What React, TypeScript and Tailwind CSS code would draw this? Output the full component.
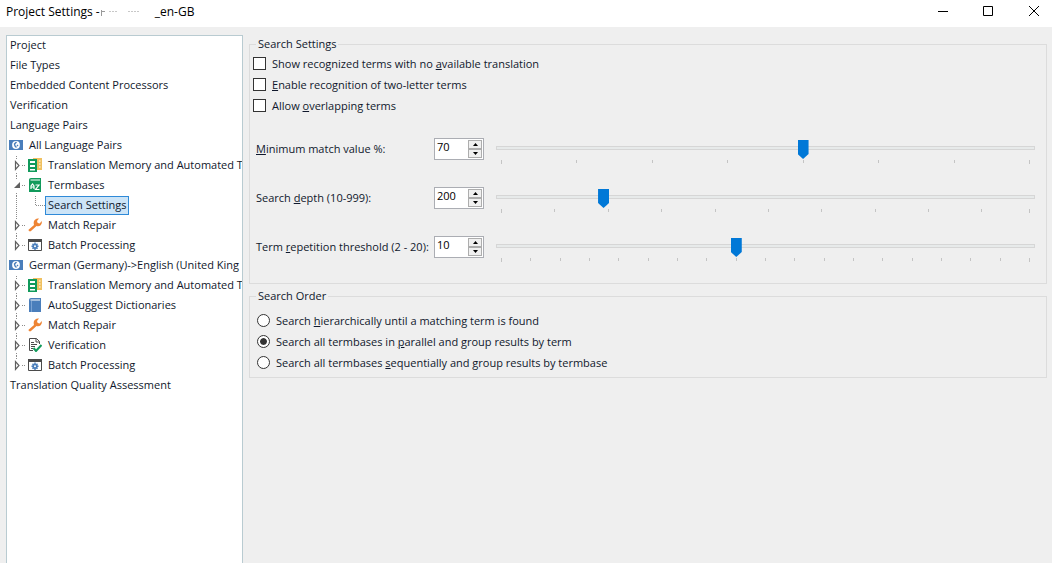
import { useState } from 'react';
import type { ReactNode } from 'react';

type IconName = 'globe' | 'memory' | 'termbase' | 'wrench' | 'batch' | 'book' | 'verify';

interface TreeItem {
  label: string;
  level: 0 | 1 | 2 | 3;
  icon?: IconName;
  open?: boolean;
  last?: boolean;
}

const treeItems: TreeItem[] = [
  { label: 'Project', level: 0 },
  { label: 'File Types', level: 0 },
  { label: 'Embedded Content Processors', level: 0 },
  { label: 'Verification', level: 0 },
  { label: 'Language Pairs', level: 0 },
  { label: 'All Language Pairs', level: 1, icon: 'globe' },
  { label: 'Translation Memory and Automated Tr', level: 2, icon: 'memory' },
  { label: 'Termbases', level: 2, icon: 'termbase', open: true },
  { label: 'Search Settings', level: 3 },
  { label: 'Match Repair', level: 2, icon: 'wrench' },
  { label: 'Batch Processing', level: 2, icon: 'batch', last: true },
  { label: 'German (Germany)->English (United King', level: 1, icon: 'globe' },
  { label: 'Translation Memory and Automated Tr', level: 2, icon: 'memory' },
  { label: 'AutoSuggest Dictionaries', level: 2, icon: 'book' },
  { label: 'Match Repair', level: 2, icon: 'wrench' },
  { label: 'Verification', level: 2, icon: 'verify' },
  { label: 'Batch Processing', level: 2, icon: 'batch', last: true },
  { label: 'Translation Quality Assessment', level: 0 },
];

const icons: Record<IconName, ReactNode> = {
  globe: (
    <>
      <path d="M0 2h14v10H0z" fill="#4a7ebb" />
      <circle cx="7" cy="7" r="3.900" fill="#fff" />
      <path d="M7.500 4 5.500 6l.5 2 1.500 1.500M8 7l1 1" fill="none" stroke="#4a7ebb" strokeWidth="1.400" />
    </>
  ),
  memory: (
    <>
      <path d="M5 0h9v12H5z" fill="#f0c060" />
      <path d="M11 2h1.500v2H11zM11 5h1.500v2H11zM11 8h1.500v2H11z" fill="#f9e3b0" />
      <path d="M0 1h9v13H0z" fill="#119a5b" />
      <path d="M2 3h5v2H2zM2 7h5v2H2zM2 11h5v1.500H2z" fill="#fff" />
    </>
  ),
  termbase: (
    <>
      <path d="M1 1.500Q1 0 3 0h10v14H1z" fill="#119a5b" />
      <path d="M2.500 1.500h9.500v1H2.500z" fill="#fff" />
      <path d="M3 11V8l1.500-2L6 8v3M3 9h3M7.500 7h3.500l-3.500 4.500h4" fill="none" stroke="#fff" strokeWidth="1.200" />
    </>
  ),
  wrench: (
    <path
      d="M1.500 13.300Q0 12.500 .8 11.500L6 7Q5 3.500 7 1.800 9 0 11 .6L9 3l.7 2 2 .5L13.700 3q.6 2.500-1 4.200-1.700 1.500-4.200.8L3 13q-.8.700-1.500.300z"
      fill="#ee8535"
    />
  ),
  batch: (
    <>
      <path d="M.5 1.500h13v11H.5z" fill="#fff" stroke="#4b4b4b" />
      <path d="M0 1h14v3H0z" fill="#4b4b4b" />
      <path d="M7 4.500v7.500M3.500 8.250h7M4.500 5.800l5 5M9.500 5.800l-5 5" stroke="#4a7ebb" strokeWidth="1.500" />
      <circle cx="7" cy="8.250" r="2.600" fill="#4a7ebb" />
      <circle cx="7" cy="8.250" r="1" fill="#fff" />
    </>
  ),
  book: (
    <>
      <path d="M1 1.500Q1 0 3 0h10v14H1z" fill="#4a7ebb" />
      <path d="M2.500 1.500h9.500v1H2.500z" fill="#fff" />
      <path d="M3.500 3v11" stroke="#7ba3d3" />
    </>
  ),
  verify: (
    <>
      <path d="M11.500 6V3.500l-3-3h-7v12H5" fill="#fff" stroke="#4b4b4b" />
      <path d="M8 .5V4h3.500M3 4.500h3M3 6.500h6M3 8.500h4M3 10.500h2" fill="none" stroke="#4b4b4b" />
      <path d="m5.500 10 2.500 3 5.500-6" fill="none" stroke="#119a5b" strokeWidth="2" />
    </>
  ),
};

const btn = 'flex h-[9px] w-3.5 items-center justify-center border border-[#adadad] bg-[#f0f0f0]';

function Connector({ item }: { item: TreeItem }) {
  if (item.level === 3) {
    return (
      <svg className="h-5 w-[33px] shrink-0" viewBox="0 0 33 20" fill="none" stroke="#8c8c8c" strokeDasharray="1 1">
        <path d="M4.500 0v20M23.500 0v10M24 9.500h9" />
      </svg>
    );
  }
  return (
    <button type="button" aria-label={`Toggle ${item.label}`} className="mr-0.5 h-5 w-3.5 shrink-0">
      <svg className="h-5 w-3.5" viewBox="0 0 14 20" fill="none">
        <path
          d={item.last ? 'M4.500 0v4M10 9.500h4' : 'M4.500 0v4M4.500 17v3M10 9.500h4'}
          stroke="#8c8c8c"
          strokeDasharray="1 1"
        />
        {item.open ? (
          <path d="M8 6v6H2z" fill="#606060" />
        ) : (
          <path d="M3.500 5.500v8l3.500-4z" fill="#fff" stroke="#606060" strokeWidth="1.200" />
        )}
      </svg>
    </button>
  );
}

function TreeRow({ item }: { item: TreeItem }) {
  const pad = item.level === 0 ? 'pl-[3px]' : item.level === 1 ? 'pl-0.5' : 'pl-[5px]';
  return (
    <li className={`flex h-5 whitespace-nowrap leading-[18px] ${pad}`}>
      {item.level > 1 && <Connector item={item} />}
      {item.icon && (
        <svg className="mr-1.5 mt-0.5 size-3.5 shrink-0" viewBox="0 0 14 14">
          {icons[item.icon]}
        </svg>
      )}
      <button
        type="button"
        className={
          item.level === 3
            ? 'h-[19px] border border-[#2f8ad8] bg-[#cce4f7] px-0.5 pb-px leading-4'
            : 'h-[18px]'
        }
      >
        {item.label}
      </button>
    </li>
  );
}

interface SliderRowProps {
  id: string;
  label: ReactNode;
  name: string;
  min: number;
  max: number;
  step: number;
  initial: number;
}

function SliderRow({ id, label, name, min, max, step, initial }: SliderRowProps) {
  const [value, setValue] = useState(initial);
  const change = (next: number) => setValue(Math.min(max, Math.max(min, next)));

  const gaps: number[] = [];
  for (let at = min; at < max; at += step) {
    gaps.push(Math.min(step, max - at));
  }

  return (
    <div className="flex h-[27px] items-start">
      <label htmlFor={id} className="w-[178px] shrink-0 whitespace-nowrap leading-[22px]">
        {label}
      </label>
      <div className="mr-3 flex h-[22px] w-[50px] shrink-0 border border-[#abadb3] bg-white p-px">
        <input
          id={id}
          type="number"
          min={min}
          max={max}
          value={value}
          onChange={(e) => change(Number(e.target.value))}
          className="h-3.5 w-8 min-w-0 appearance-none pl-px text-black outline-none [-moz-appearance:textfield] [&::-webkit-inner-spin-button]:appearance-none"
        />
        <div className="flex flex-col bg-[#f0f0f0]">
          <button type="button" aria-label={`Increase ${name}`} className={btn} onClick={() => change(value + 1)}>
            <svg className="h-[3px] w-[5px]" viewBox="0 0 5 3">
              <path d="M2.500 0 5 3H0z" />
            </svg>
          </button>
          <button type="button" aria-label={`Decrease ${name}`} className={btn} onClick={() => change(value - 1)}>
            <svg className="h-[3px] w-[5px]" viewBox="0 0 5 3">
              <path d="M0 0h5L2.500 3z" />
            </svg>
          </button>
        </div>
      </div>
      <div className="min-w-0 flex-1 pt-0.5">
        <input
          type="range"
          aria-label={name}
          min={min}
          max={max}
          value={value}
          onChange={(e) => change(Number(e.target.value))}
          className="block h-4 w-full appearance-none bg-transparent [&::-webkit-slider-runnable-track]:h-1 [&::-webkit-slider-runnable-track]:border [&::-webkit-slider-runnable-track]:border-[#d6d6d6] [&::-webkit-slider-runnable-track]:bg-[#e7eaea] [&::-webkit-slider-thumb]:-mt-[7px] [&::-webkit-slider-thumb]:h-[19px] [&::-webkit-slider-thumb]:w-[11px] [&::-webkit-slider-thumb]:appearance-none [&::-webkit-slider-thumb]:bg-[#0078d7] [&::-webkit-slider-thumb]:[clip-path:polygon(0_0,100%_0,100%_74%,50%_100%,0_74%)]"
        />
        <div className="mt-1 flex px-[5px]">
          {gaps.map((gap, i) => (
            <span
              key={i}
              className={`basis-0 border-l border-[#c4c4c4] ${i === 0 ? 'h-1' : 'h-[3px]'}`}
              style={{ flexGrow: gap }}
            />
          ))}
          <span className="h-1 border-l border-[#c4c4c4]" />
        </div>
      </div>
    </div>
  );
}

const checks = [
  { id: 'show', text: <>Show recognized terms with no <u>a</u>vailable translation</> },
  { id: 'enable', text: <><u>E</u>nable recognition of two-letter terms</> },
  { id: 'allow', text: <>Allow <u>o</u>verlapping terms</> },
];

const orders = [
  { id: 'hierarchical', text: <>Search <u>h</u>ierarchically until a matching term is found</> },
  { id: 'parallel', text: <>Search all termbases in <u>p</u>arallel and group results by term</> },
  { id: 'sequential', text: <>Search all termbases <u>s</u>equentially and group results by termbase</> },
];

export default function App() {
  const [order, setOrder] = useState('parallel');

  return (
    <div className="flex min-h-screen flex-col bg-[#efefef] font-['Open_Sans','Noto_Sans',sans-serif] text-[11px] text-[#10182c]">
      <header className="flex h-[27px] items-center bg-white pb-1 pl-1.5 text-xs text-black">
        <h1 className="flex items-center whitespace-nowrap">
          Project Settings -
          <svg className="mr-1 h-3 w-[51px]" viewBox="0 0 51 12" fill="none" stroke="#c8c8c8">
            <path d="M1.500 4v6M2 5.500h3" stroke="#9a9a9a" />
            <path d="M9 5.500h8M28 5.500h12" strokeDasharray="2 1" />
          </svg>
          _en-GB
        </h1>
        <div className="ml-auto flex gap-2.5">
          <button type="button" aria-label="Minimize" className="flex h-[22px] w-9 items-center justify-center">
            <svg className="h-[11px] w-[11px]" viewBox="0 0 11 11" stroke="#000">
              <path d="M1 5.500h10" />
            </svg>
          </button>
          <button type="button" aria-label="Maximize" className="flex h-[22px] w-9 items-center justify-center">
            <svg className="h-[11px] w-[11px]" viewBox="0 0 11 11" fill="none" stroke="#000">
              <path d="M.5.5h9v9h-9z" />
            </svg>
          </button>
          <button type="button" aria-label="Close" className="flex h-[22px] w-9 items-center justify-center">
            <svg className="h-[11px] w-[11px]" viewBox="0 0 11 11" stroke="#000">
              <path d="m0 0 10 10M10 0 0 10" />
            </svg>
          </button>
        </div>
      </header>

      <main className="flex flex-1 gap-1.5 pl-1.5 pr-[5px] pt-2">
        <nav aria-label="Settings" className="w-[237px] shrink-0 overflow-hidden border border-b-0 border-[#b9cbd1] bg-white">
          <ul>
            {treeItems.map((item, i) => (
              <TreeRow key={i} item={item} />
            ))}
          </ul>
        </nav>

        <div className="min-w-0 flex-1 pt-px">
          <fieldset className="min-w-0 border border-[#dcdcdc] pb-5 pl-1.5 pr-[11px]">
            <legend className="px-0.5 leading-4">Search Settings</legend>
            <div className="-ml-[3px] mb-[22px] pt-px">
              {checks.map((c) => (
                <div key={c.id} className="flex h-[21px] items-center gap-1.5">
                  <input
                    id={c.id}
                    type="checkbox"
                    className="size-[13px] shrink-0 appearance-none border border-[#333] bg-white checked:bg-[#333]"
                  />
                  <label htmlFor={c.id} className="pt-0.5">{c.text}</label>
                </div>
              ))}
            </div>
            <div className="flex flex-col gap-[22px]">
              <SliderRow id="match" name="Minimum match value" label={<><u>M</u>inimum match value %:</>} min={30} max={100} step={10} initial={70} />
              <SliderRow id="depth" name="Search depth" label={<>Search <u>d</u>epth (10-999):</>} min={10} max={999} step={100} initial={200} />
              <SliderRow id="repeat" name="Term repetition threshold" label={<>Term <u>r</u>epetition threshold (2 - 20):</>} min={2} max={20} step={1} initial={10} />
            </div>
          </fieldset>

          <fieldset className="mt-1 min-w-0 border border-[#dcdcdc] pb-1 pl-1.5">
            <legend className="px-0.5 leading-4">Search Order</legend>
            <div className="pl-px pt-1.5">
              {orders.map((o) => (
                <div key={o.id} className="flex h-[21px] items-center gap-1.5">
                  <input
                    id={o.id}
                    type="radio"
                    name="order"
                    checked={order === o.id}
                    onChange={() => setOrder(o.id)}
                    className="size-[13px] shrink-0 appearance-none rounded-full border border-[#333] bg-white bg-clip-content p-0.5 checked:bg-[#333] checked:shadow-[inset_0_0_0_2px_#fff] not-checked:bg-clip-border"
                  />
                  <label htmlFor={o.id} className="pt-0.5">{o.text}</label>
                </div>
              ))}
            </div>
          </fieldset>
        </div>
      </main>
    </div>
  );
}
